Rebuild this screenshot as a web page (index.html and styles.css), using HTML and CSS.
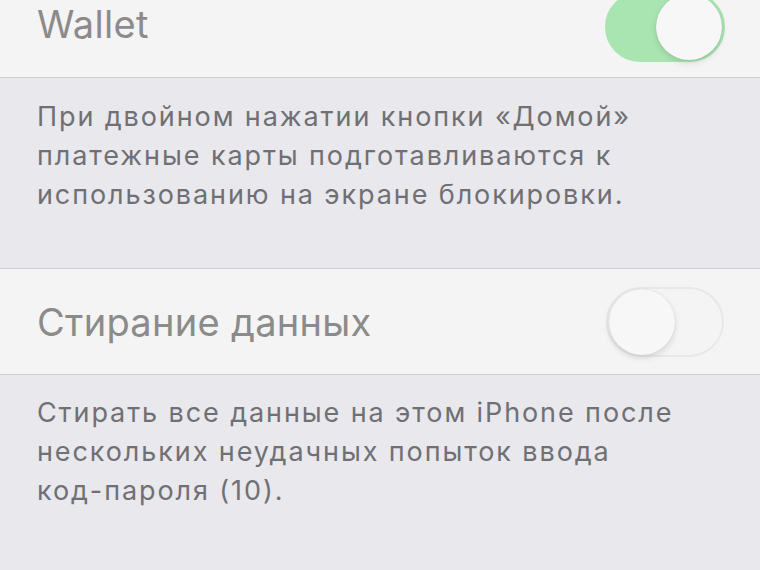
FILE: index.html
```html
<!DOCTYPE html>
<html lang="ru">
<head>
  <meta charset="UTF-8">
  <title>Настройки</title>
  <link rel="stylesheet" href="styles.css">
</head>
<body>
  <div class="group">
    <div class="cell cell-first">
      <span class="cell-title">Wallet</span>
      <span class="switch on"><span class="knob"></span></span>
    </div>
    <div class="footer footer-tall">
      При двойном нажатии кнопки «Домой»<br>
      платежные карты подготавливаются к<br>
      использованию на экране блокировки.
    </div>
    <div class="cell">
      <span class="cell-title">Стирание данных</span>
      <span class="switch"><span class="knob"></span></span>
    </div>
    <div class="footer">
      Стирать все данные на этом iPhone после<br>
      нескольких неудачных попыток ввода<br>
      код-пароля (10).
    </div>
  </div>
</body>
</html>
```

FILE: styles.css
```css
body {
  margin: 0;
  background: #e8e8ed;
  font-family: Inter, 'Noto Sans', sans-serif;
  overflow: hidden;
}
.group {
  display: flex;
  flex-direction: column;
}
.cell {
  display: flex;
  align-items: center;
  justify-content: space-between;
  height: 107px;
  padding: 0 36px 0 37px;
  background: #f4f4f4;
  border-top: 1px solid #cfcfd3;
  border-bottom: 1px solid #cfcfd3;
  box-sizing: border-box;
}
.cell-first {
  margin-top: -29px;
  border-top: none;
}
.cell-title {
  font-size: 38px;
  color: #8b8b8b;
  letter-spacing: 0.3px;
}
.switch {
  width: 118px;
  height: 70px;
  border-radius: 35px;
  background: #f4f4f4;
  border: 2px solid #e8e8e8;
  box-sizing: border-box;
  display: flex;
  align-items: center;
  padding: 0 1px;
}
.switch.on {
  width: 120px;
  margin-right: -1px;
  margin-top: 6px;
  background: #a9e5b1;
  border-color: #a9e5b1;
  justify-content: flex-end;
}
.knob {
  width: 66px;
  height: 66px;
  border-radius: 50%;
  background: #f7f7f7;
  box-shadow: 0 3px 6px rgba(0,0,0,0.12), 0 0 1px rgba(0,0,0,0.15);
}
.footer {
  padding: 18px 37px 20px;
  font-size: 27px;
  line-height: 39px;
  letter-spacing: 1.9px;
  color: #707074;
}
.footer-tall {
  padding-top: 19px;
  padding-bottom: 54px;
}
```
